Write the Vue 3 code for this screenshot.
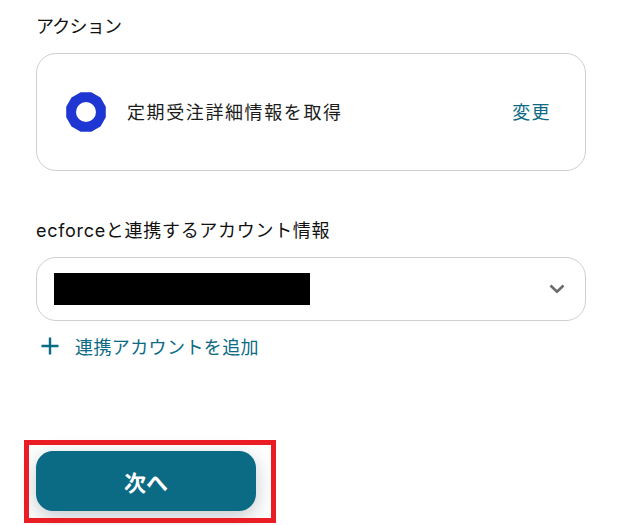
<script setup>
const action = "定期受注詳細情報を取得";
</script>

<template>
  <div class="page">
    <h2 class="label first">アクション</h2>
    <div class="card">
      <svg class="logo" width="40" height="40" viewBox="0 0 40 40">
        <path
          fill-rule="evenodd"
          fill="#1e36d2"
          d="M25.3 0.2 L34.5 5.5 L39.8 14.7 L39.8 25.3 L34.5 34.5 L25.3 39.8 L14.7 39.8 L5.5 34.5 L0.2 25.3 L0.2 14.7 L5.5 5.5 L14.7 0.2 Z M20 10 A10 10 0 1 0 20 30 A10 10 0 1 0 20 10 Z"
        />
      </svg>
      <span class="action-name">{{ action }}</span>
      <a class="change">変更</a>
    </div>

    <h2 class="label second">ecforceと連携するアカウント情報</h2>
    <div class="select">
      <div class="redacted"></div>
      <svg class="chevron" width="16" height="10" viewBox="0 0 16 10">
        <path d="M1.5 1.5 L8 7.8 L14.5 1.5" fill="none" stroke="#6b6b6b" stroke-width="2.6" />
      </svg>
    </div>
    <div class="add">
      <svg width="18" height="18" viewBox="0 0 18 18">
        <path d="M9 0.5 V17.5 M0.5 9 H17.5" stroke="#0b6a84" stroke-width="2.4" fill="none" />
      </svg>
      <span>連携アカウントを追加</span>
    </div>

    <div class="next-wrap">
      <button class="next">次へ</button>
      <div class="highlight"></div>
    </div>
  </div>
</template>

<style>
html,
body {
  background: #fff;
}
</style>

<style scoped>
.page {
  width: 550px;
  height: 525px;
  overflow: hidden;
  padding-left: 36px;
  font-family: "Inter", "Noto Sans CJK JP", sans-serif;
  color: #1c1c1c;
}

.label {
  margin: 0;
  font-size: 18px;
  font-weight: 400;
  line-height: 26px;
  color: #111;
}

.first {
  margin-top: 14px;
  letter-spacing: -0.8px;
}

.second {
  margin-top: 47px;
  letter-spacing: 0.7px;
}

.card {
  margin-top: 13px;
  height: 118px;
  box-sizing: border-box;
  border: 1px solid #cfcfcf;
  border-radius: 20px;
  display: flex;
  align-items: center;
  padding: 0 34px 0 29px;
}

.logo {
  flex: none;
}

.action-name {
  margin-left: 21px;
  margin-top: -2px;
  font-size: 18px;
  letter-spacing: 1.6px;
  flex: 1;
}

.change {
  margin-top: -2px;
  font-size: 18px;
  color: #0b6a84;
  letter-spacing: 1.4px;
}

.select {
  margin-top: 13px;
  height: 64px;
  box-sizing: border-box;
  border: 1px solid #cfcfcf;
  border-radius: 20px;
  display: flex;
  align-items: center;
  justify-content: space-between;
  padding: 0 20px 0 17px;
}

.redacted {
  width: 256px;
  height: 32px;
  background: #000;
}

.add {
  margin-top: 12px;
  margin-left: 5px;
  display: flex;
  align-items: center;
  gap: 16px;
  height: 26px;
  font-size: 18px;
  color: #0b6a84;
  letter-spacing: 0.4px;
}

.next-wrap {
  position: relative;
  width: 220px;
  margin-top: 92px;
}

.next {
  display: block;
  width: 220px;
  height: 60px;
  border: 0;
  border-radius: 17px;
  background: #0b6a84;
  color: #fff;
  font-family: inherit;
  font-size: 22px;
  font-weight: 700;
  box-shadow: 0 6px 20px rgba(40, 60, 75, 0.28);
}

.highlight {
  position: absolute;
  left: -12px;
  top: -11px;
  width: 252px;
  height: 83px;
  box-sizing: border-box;
  border: 5px solid #ea1c24;
}
</style>
